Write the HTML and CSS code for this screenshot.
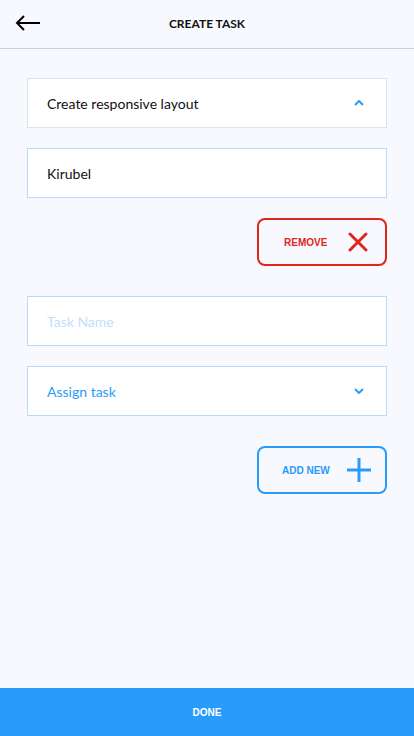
FILE: index.html
```html
<!DOCTYPE html>
<html>
<head>
<meta charset="utf-8">
<link rel="stylesheet" href="styles.css">
</head>
<body>
<div class="app">
  <header class="header">
    <svg class="back" width="26" height="16" viewBox="0 0 26 16"><path d="M25 8H2M9 1L2 8l7 7" fill="none" stroke="#000" stroke-width="2"/></svg>
    <div class="title">CREATE TASK</div>
  </header>
  <main class="content">
    <div class="field field-gray">
      <span class="text">Create responsive layout</span>
      <svg class="chev" width="10" height="6" viewBox="0 0 10 6"><path d="M1 5l4-4 4 4" fill="none" stroke="#2a9bf8" stroke-width="2"/></svg>
    </div>
    <div class="field field-blue gap20">
      <span class="text">Kirubel</span>
    </div>
    <div class="btn-row gap20">
      <button class="btn btn-red">
        <span class="btn-label">REMOVE</span>
        <svg width="20" height="20" viewBox="0 0 20 20"><path d="M2 2l16 16M18 2L2 18" stroke="#e0251d" stroke-width="3" stroke-linecap="round"/></svg>
      </button>
    </div>
    <div class="field field-blue gap30">
      <span class="text placeholder">Task Name</span>
    </div>
    <div class="field field-blue gap20">
      <span class="text blue">Assign task</span>
      <svg class="chev" width="10" height="6" viewBox="0 0 10 6"><path d="M1 1l4 4 4-4" fill="none" stroke="#2a9bf8" stroke-width="2"/></svg>
    </div>
    <div class="btn-row gap30">
      <button class="btn btn-blue">
        <span class="btn-label">ADD NEW</span>
        <svg width="24" height="24" viewBox="0 0 24 24"><path d="M12 0v24M0 12h24" stroke="#2a9bf8" stroke-width="3"/></svg>
      </button>
    </div>
  </main>
  <footer class="done">DONE</footer>
</div>
</body>
</html>
```
FILE: styles.css
```css
* { box-sizing: border-box; }
html, body { margin: 0; padding: 0; }
body { background: #f8f9fe; font-family: Lato, "Liberation Sans", sans-serif; }
.app { height: 736px; display: flex; flex-direction: column; }
.header {
  height: 49px; display: flex; align-items: center; justify-content: center;
  position: relative; border-bottom: 1px solid #cfd1d6;
}
.back { position: absolute; left: 15px; top: 15px; }
.title { font-size: 12px; font-weight: 700; color: #111; margin-top: -2px; }
.content { flex: 1; padding: 29px 27px 0 27px; display: flex; flex-direction: column; }
.field {
  height: 50px; background: #fff; display: flex; align-items: center;
  justify-content: space-between; padding: 0 22px 0 19px;
}
.field-gray { border: 1px solid #dde4ee; }
.field-blue { border: 1px solid #b5dcfb; }
.text { font-size: 14px; color: #111; }
.placeholder { color: #bfe0fb; }
.blue { color: #2a9bf8; }
.chev { display: block; }
.gap20 { margin-top: 20px; }
.gap30 { margin-top: 30px; }
.btn-row { display: flex; justify-content: flex-end; }
.btn {
  width: 130px; height: 48px; border-radius: 8px; background: transparent;
  display: flex; align-items: center; justify-content: space-between;
  padding: 0 17px 0 25px; font-family: "Liberation Sans", Arial, sans-serif;
}
.btn-label { font-size: 10px; font-weight: 700; }
.btn-red { border: 2px solid #e0251d; color: #e0251d; padding-left: 25px; }
.btn-blue { border: 2px solid #2a9bf8; color: #2a9bf8; padding: 0 14px 0 23px; }
.done {
  height: 48px; background: #2a9bf8; color: #fff; display: flex;
  align-items: center; justify-content: center;
  font-family: "Liberation Sans", Arial, sans-serif; font-size: 10px; font-weight: 700;
}
```
